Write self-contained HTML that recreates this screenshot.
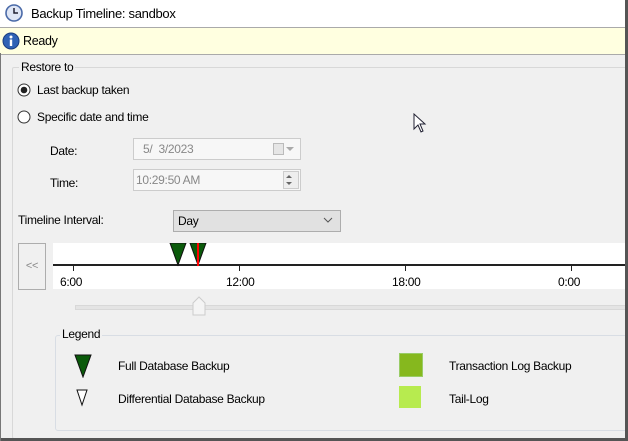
<!DOCTYPE html>
<html><head><style>
body{margin:0;width:628px;height:441px;overflow:hidden;background:#f0f0f0;font-family:"Liberation Sans",sans-serif;font-size:12px;color:#000;position:relative;letter-spacing:-0.3px}
.a{position:absolute}
</style></head><body>
<div class="a" style="left:0;top:0;width:625px;height:27px;background:#fff"></div>
<svg class="a" style="left:4px;top:3px" width="20" height="20"><circle cx="10" cy="10" r="8" fill="#dfe6f5" stroke="#4a6aa8" stroke-width="1.6"/><path d="M10 5V10H14" stroke="#223" stroke-width="1.5" fill="none"/></svg>
<div class="a" style="left:31px;top:6px;font-size:13px">Backup Timeline: sandbox</div>
<div class="a" style="left:0;top:27px;width:625px;height:26px;background:#ffffe0;border-top:1px solid #aaa;border-bottom:1px solid #aaa"></div>
<svg class="a" style="left:2px;top:32px" width="18" height="18"><circle cx="9" cy="9" r="8" fill="#2f62b5" stroke="#1a3d80"/><circle cx="9" cy="5" r="1.5" fill="#fff"/><rect x="7.8" y="7.5" width="2.4" height="6.5" fill="#fff"/></svg>
<div class="a" style="left:23px;top:34px;font-size:12.5px">Ready</div>
<div class="a" style="left:12px;top:67px;width:620px;height:370px;border:1px solid #d8d8d8;border-radius:2px"></div>
<div class="a" style="left:19px;top:60px;background:#f0f0f0;padding:0 2px">Restore to</div>
<svg class="a" style="left:17px;top:83px" width="14" height="14"><circle cx="7" cy="7" r="6" fill="#fff" stroke="#333"/><circle cx="7" cy="7" r="3.3" fill="#222"/></svg>
<div class="a" style="left:37px;top:83px">Last backup taken</div>
<svg class="a" style="left:17px;top:110px" width="14" height="14"><circle cx="7" cy="7" r="6" fill="#fff" stroke="#333"/></svg>
<div class="a" style="left:37px;top:110px">Specific date and time</div>
<div class="a" style="left:50px;top:144px">Date:</div>
<div class="a" style="left:133px;top:138px;width:166px;height:20px;background:#f7f7f7;border:1px solid #ccc;color:#888;font-size:12px;line-height:20px;text-indent:9px">5/&nbsp; 3/2023</div>
<div class="a" style="left:273px;top:143px;width:9px;height:10px;border:1px solid #bbb;background:#e6e6e6"></div>
<div class="a" style="left:286px;top:147px;border:4px solid transparent;border-top:4px solid #aaa"></div>
<div class="a" style="left:50px;top:176px">Time:</div>
<div class="a" style="left:133px;top:169px;width:166px;height:20px;background:#f7f7f7;border:1px solid #ccc;color:#888;line-height:20px;text-indent:2px">10:29:50 AM</div>
<div class="a" style="left:283px;top:171px;width:14px;height:16px;border:1px solid #ccc;background:#eee"></div>
<div class="a" style="left:286px;top:172px;border:3px solid transparent;border-bottom:3px solid #666"></div>
<div class="a" style="left:286px;top:182px;border:3px solid transparent;border-top:3px solid #666"></div>
<div class="a" style="left:18px;top:213px">Timeline Interval:</div>
<div class="a" style="left:173px;top:210px;width:166px;height:20px;background:#e1e1e1;border:1px solid #adadad;line-height:20px;text-indent:4px">Day</div>
<svg class="a" style="left:323px;top:216px" width="10" height="8"><path d="M1 2L5 6L9 2" stroke="#555" fill="none"/></svg>
<div class="a" style="left:18px;top:243px;width:26px;height:45px;border:1px solid #adadad;background:#f0f0f0;color:#888;font-size:11px;line-height:45px;text-align:center">&lt;&lt;</div>
<div class="a" style="left:53px;top:243px;width:572px;height:46px;background:#fff"></div>
<div class="a" style="left:53px;top:264px;width:572px;height:2px;background:#222"></div>
<div class="a" style="left:73px;top:266px;width:1px;height:5px;background:#222"></div>
<div class="a" style="left:239px;top:266px;width:1px;height:5px;background:#222"></div>
<div class="a" style="left:405px;top:266px;width:1px;height:5px;background:#222"></div>
<div class="a" style="left:571px;top:266px;width:1px;height:5px;background:#222"></div>
<div class="a" style="left:60px;top:275px">6:00</div>
<div class="a" style="left:226px;top:275px">12:00</div>
<div class="a" style="left:392px;top:275px">18:00</div>
<div class="a" style="left:558px;top:275px">0:00</div>
<svg class="a" style="left:169px;top:243px" width="40" height="24"><path d="M1 0H17L9 22Z" fill="#0a5a0a" stroke="#111"/><path d="M21 0H37L29 22Z" fill="#0a5a0a" stroke="#111"/><rect x="28" y="0" width="2" height="23" fill="#f00"/></svg>
<div class="a" style="left:75px;top:305px;width:550px;height:3px;background:#e4e4e4;border:1px solid #d8d8d8"></div>
<svg class="a" style="left:192px;top:296px" width="14" height="20"><path d="M1 19V7L7 1L13 7V19Z" fill="#f4f4f4" stroke="#ccc"/></svg>
<div class="a" style="left:55px;top:335px;width:580px;height:94px;border:1px solid #d8dde4;border-radius:3px"></div>
<div class="a" style="left:60px;top:327px;background:#f0f0f0;padding:0 2px">Legend</div>
<svg class="a" style="left:74px;top:354px" width="18" height="24"><path d="M1 1H17L9 23Z" fill="#0a5a0a" stroke="#111"/></svg>
<div class="a" style="left:118px;top:359px">Full Database Backup</div>
<svg class="a" style="left:76px;top:389px" width="12" height="18"><path d="M1 1H11L6 16Z" fill="#fff" stroke="#111"/></svg>
<div class="a" style="left:118px;top:392px">Differential Database Backup</div>
<div class="a" style="left:399px;top:353px;width:22px;height:22px;background:#86b81e;border:1px solid #9c6"></div>
<div class="a" style="left:449px;top:359px">Transaction Log Backup</div>
<div class="a" style="left:399px;top:386px;width:22px;height:22px;background:#b7eb4f"></div>
<div class="a" style="left:449px;top:392px">Tail-Log</div>
<svg class="a" style="left:413px;top:113px" width="14" height="22"><path d="M1 1V16L5 12L8 19L10 18L7 11H12Z" fill="#fff" stroke="#223"/></svg>
<div class="a" style="left:625px;top:0;width:3px;height:441px;background:#555"></div>
<div class="a" style="left:0;top:438px;width:628px;height:3px;background:#555"></div>
<div class="a" style="left:0;top:53px;width:1px;height:388px;background:#777"></div>
</body></html>
